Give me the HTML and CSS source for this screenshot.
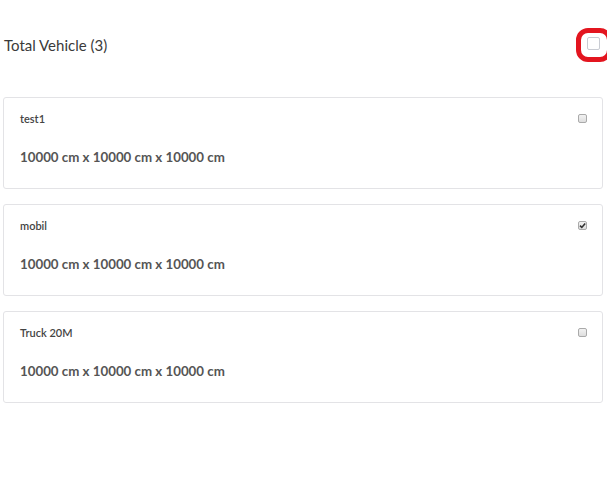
FILE: index.html
```html
<!DOCTYPE html>
<html>
<head>
<meta charset="utf-8">
<link rel="stylesheet" href="styles.css">
</head>
<body>
<div class="page">
  <div class="header">
    <div class="title">Total Vehicle (3)</div>
    <span class="focus-ring"><span class="big-check"></span></span>
  </div>
  <div class="list">
    <div class="card">
      <div class="card-head"><span class="name">test1</span><span class="check"></span></div>
      <div class="dims">10000 cm x 10000 cm x 10000 cm</div>
    </div>
    <div class="card">
      <div class="card-head"><span class="name">mobil</span><span class="check checked"><svg viewBox="0 0 9 9" width="9" height="9"><path d="M2 4.6 L3.8 6.4 L7.2 2.4" fill="none" stroke="#333" stroke-width="1.6"/></svg></span></div>
      <div class="dims">10000 cm x 10000 cm x 10000 cm</div>
    </div>
    <div class="card">
      <div class="card-head"><span class="name">Truck 20M</span><span class="check"></span></div>
      <div class="dims">10000 cm x 10000 cm x 10000 cm</div>
    </div>
  </div>
</div>
</body>
</html>
```
FILE: styles.css
```css
html, body {
  margin: 0;
  padding: 0;
  background: #fff;
  overflow: hidden;
}
body {
  font-family: Lato, "Open Sans", sans-serif;
  color: #333;
}
.page {
  padding: 0 4px 0 3px;
}
.header {
  margin-top: 28px;
  height: 34px;
  display: flex;
  align-items: center;
  justify-content: space-between;
}
.title {
  font-size: 15px;
  color: #3a3a3a;
  padding-left: 1px;
}
.focus-ring {
  box-sizing: border-box;
  width: 36px;
  height: 34px;
  border: 5px solid #e3151f;
  border-radius: 12px;
  margin-right: -9px;
  display: flex;
  align-items: center;
  justify-content: center;
}
.big-check {
  box-sizing: border-box;
  width: 13px;
  height: 13px;
  border: 1px solid #c9ccd3;
  border-radius: 2px;
  background: #fff;
  margin-left: -1px;
  margin-top: -3px;
}
.list {
  margin-top: 35px;
  display: flex;
  flex-direction: column;
  gap: 15px;
}
.card {
  border: 1px solid #e3e3e6;
  border-radius: 3px;
  padding: 13px 15px 22px 16px;
  box-sizing: border-box;
  height: 92px;
}
.card-head {
  display: flex;
  justify-content: space-between;
  align-items: center;
  height: 14px;
}
.name {
  font-size: 11px;
  font-weight: 600;
  color: #444;
}
.check {
  box-sizing: border-box;
  width: 9px;
  height: 9px;
  border: 1px solid #aaa;
  border-radius: 2px;
  background: linear-gradient(#f2f2f2, #dedede);
  display: flex;
  align-items: center;
  justify-content: center;
}
.check svg {
  display: block;
  flex: none;
}
.dims {
  margin-top: 24px;
  line-height: 16px;
  font-size: 13.3px;
  font-weight: 700;
  color: #555;
}
```
